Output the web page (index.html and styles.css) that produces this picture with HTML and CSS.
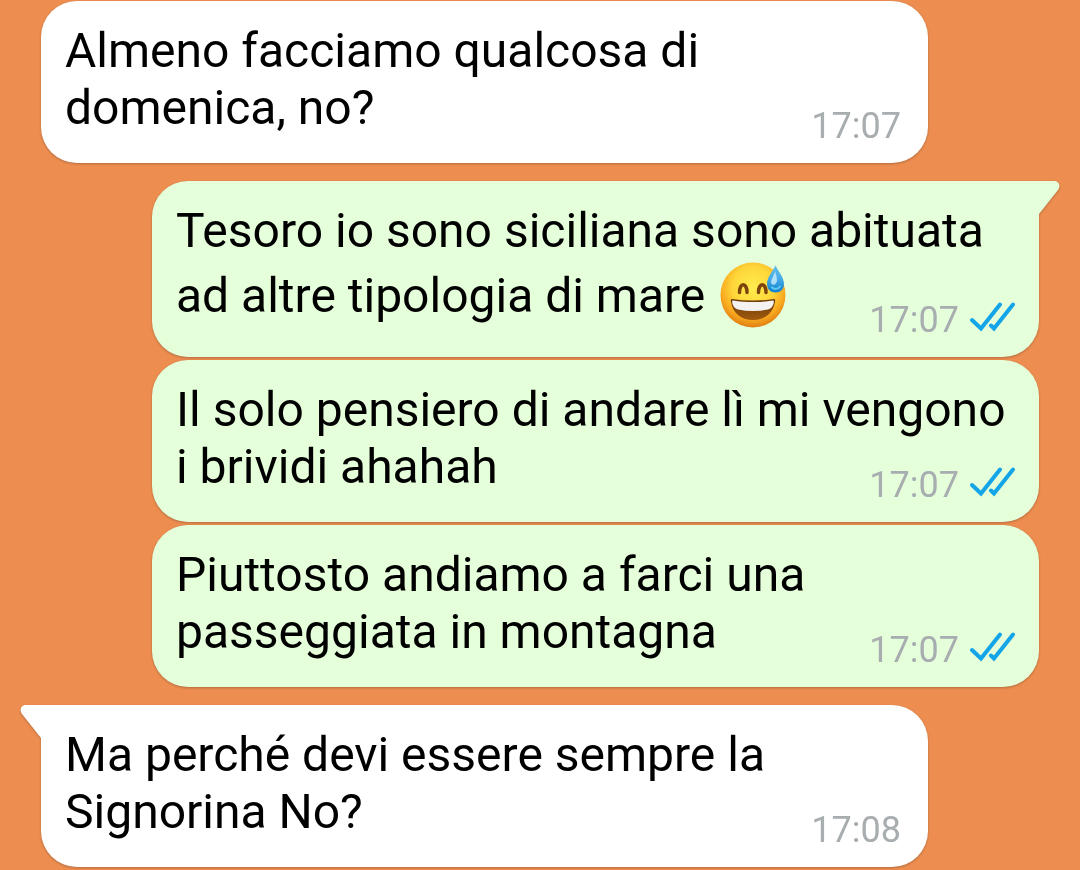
FILE: index.html
```html
<!DOCTYPE html>
<html lang="it">
<head>
    <meta charset="UTF-8">
    <meta name="viewport" content="width=device-width, initial-scale=1.0">
    <title>Chat</title>
    <link rel="stylesheet" href="styles.css">
</head>
<body>
    <!-- shared double tick -->
    <svg class="sprite" aria-hidden="true">
        <symbol id="ticks" viewBox="0 0 45 30">
            <path d="M2 18L11 26.5L30 2.5M21 23.5L24 26.5L43 2.5" fill="none" stroke="#14a5e8" stroke-width="4" stroke-linecap="round"/>
        </symbol>
    </svg>
    <main class="chat">
        <div class="message in">
            <p class="text">Almeno facciamo qualcosa di domenica, no?</p>
            <div class="info"><time>17:07</time></div>
        </div>
        <div class="message out first">
            <svg class="tail" viewBox="0 0 22 34" aria-hidden="true">
                <path d="M0 0H16C21 0 23 5 20 9L1 33V34H0Z" fill="#e5ffdb"/>
            </svg>
            <p class="text">Tesoro io sono siciliana sono abituata ad altre tipologia di mare <svg class="emoji" viewBox="0 0 66 66" role="img" aria-label="sorriso con goccia di sudore">
                <defs>
                    <radialGradient id="face" cx="0.5" cy="0.38" r="0.64">
                        <stop offset="0" stop-color="#ffec4e"/>
                        <stop offset="0.5" stop-color="#fed639"/>
                        <stop offset="0.76" stop-color="#f9ab20"/>
                        <stop offset="1" stop-color="#dc7610"/>
                    </radialGradient>
                    <linearGradient id="mouth" x1="0" y1="0" x2="0" y2="1">
                        <stop offset="0" stop-color="#6b3a0b"/>
                        <stop offset="1" stop-color="#a05a0e"/>
                    </linearGradient>
                    <linearGradient id="drop" x1="0" y1="0" x2="0" y2="1">
                        <stop offset="0" stop-color="#62bdec"/>
                        <stop offset="0.5" stop-color="#45abe8"/>
                        <stop offset="1" stop-color="#0f7fcb"/>
                    </linearGradient>
                </defs>
                <circle cx="33" cy="33" r="32.5" fill="url(#face)"/>
                <path d="M19.500 30.500C19.500 20 27 20 27 30.500M38.500 30.500C38.500 20 46 20 46 30.500" fill="none" stroke="#7c430c" stroke-width="3.500" stroke-linecap="round"/>
                <path d="M12 37C26 39 40 39 54 37C55 37 55.500 38 55 40C53 52 44 58 33 58C22 58 13 52 11 40C10.500 38 11 37 12 37Z" fill="url(#mouth)"/>
                <path d="M13 38.500C26 40.500 40 40.500 53 38.500C54 38.500 54 40 53.500 42C52.500 45 50.500 47 48 47.500C38 49.500 28 49.500 18 47.500C15.500 47 13.500 45 12.500 42C12 40 12 38.500 13 38.500Z" fill="#f4f1f1"/>
                <path d="M55.500 3.500C58 9 64 15 64 22C64 27 60.500 30.500 55.500 30.500C50.500 30.500 47 27 47 22C47 15 53 9 55.500 3.500Z" fill="url(#drop)"/>
                <path d="M55 9C54 14 51 17 51 21C53 24 56 23 57 19C57 16 56 12 55 9Z" fill="#d5f2fd" opacity="0.75"/>
                <path d="M52 25.500C54 27.500 58 27.500 60 24.500" fill="none" stroke="#5ccaf2" stroke-width="2" stroke-linecap="round"/>
            </svg></p>
            <div class="info"><time>17:07</time><svg class="ticks" role="img" aria-label="Letto"><use href="#ticks"/></svg></div>
        </div>
        <div class="message out">
            <p class="text">Il solo pensiero di andare lì mi vengono i brividi ahahah</p>
            <div class="info"><time>17:07</time><svg class="ticks" role="img" aria-label="Letto"><use href="#ticks"/></svg></div>
        </div>
        <div class="message out">
            <p class="text">Piuttosto andiamo a farci una passeggiata in montagna</p>
            <div class="info"><time>17:07</time><svg class="ticks" role="img" aria-label="Letto"><use href="#ticks"/></svg></div>
        </div>
        <div class="message in first">
            <svg class="tail" viewBox="0 0 22 34" aria-hidden="true">
                <path d="M22 0H6C1 0 -1 5 2 9L21 33V34H22Z" fill="#ffffff"/>
            </svg>
            <p class="text">Ma perché devi essere sempre la Signorina No?</p>
            <div class="info"><time>17:08</time></div>
        </div>
    </main>
</body>
</html>
```

FILE: styles.css
```css
* {
    margin: 0;
    padding: 0;
    box-sizing: border-box;
}
body {
    background-color: #ed8d4f;
    font-family: Roboto, "Noto Sans", sans-serif;
    color: #000000;
}
.sprite {
    display: none;
}
.chat {
    display: flex;
    flex-direction: column;
    gap: 3px;
    padding: 1px 41px 3px 41px;
}
/* text and info share one cell, so the time sits in the bottom corner */
.message {
    position: relative;
    display: grid;
    padding: 21px 24px 16px 24px;
    border-radius: 36px;
    filter: drop-shadow(0 1px 1px rgba(90, 60, 40, .4));
}
.in {
    margin-right: 111px;
    background-color: #ffffff;
}
.out {
    margin-left: 111px;
    background-color: #e5ffdb;
}
.first {
    margin-top: 15px;
}
.in.first {
    border-top-left-radius: 0;
}
.out.first {
    border-top-right-radius: 0;
}
.tail {
    position: absolute;
    top: 0;
    width: 22px;
    height: 34px;
}
.in .tail {
    right: 100%;
    margin-right: -1px;
}
.out .tail {
    left: 100%;
    margin-left: -1px;
}
.text {
    grid-area: 1 / 1;
    padding-bottom: 11px;
    font-size: 48px;
    line-height: 57px;
}
.emoji {
    width: 66px;
    height: 66px;
    margin: 3px 0 2px 3px;
    vertical-align: -18px;
}
.info {
    grid-area: 1 / 1;
    align-self: end;
    justify-self: end;
    display: flex;
    align-items: center;
    gap: 11px;
    font-size: 36px;
    line-height: 42px;
    color: #a8adb0;
}
.in .info {
    padding-right: 3px;
}
.ticks {
    width: 45px;
    height: 30px;
    margin-bottom: 6px;
}
```
